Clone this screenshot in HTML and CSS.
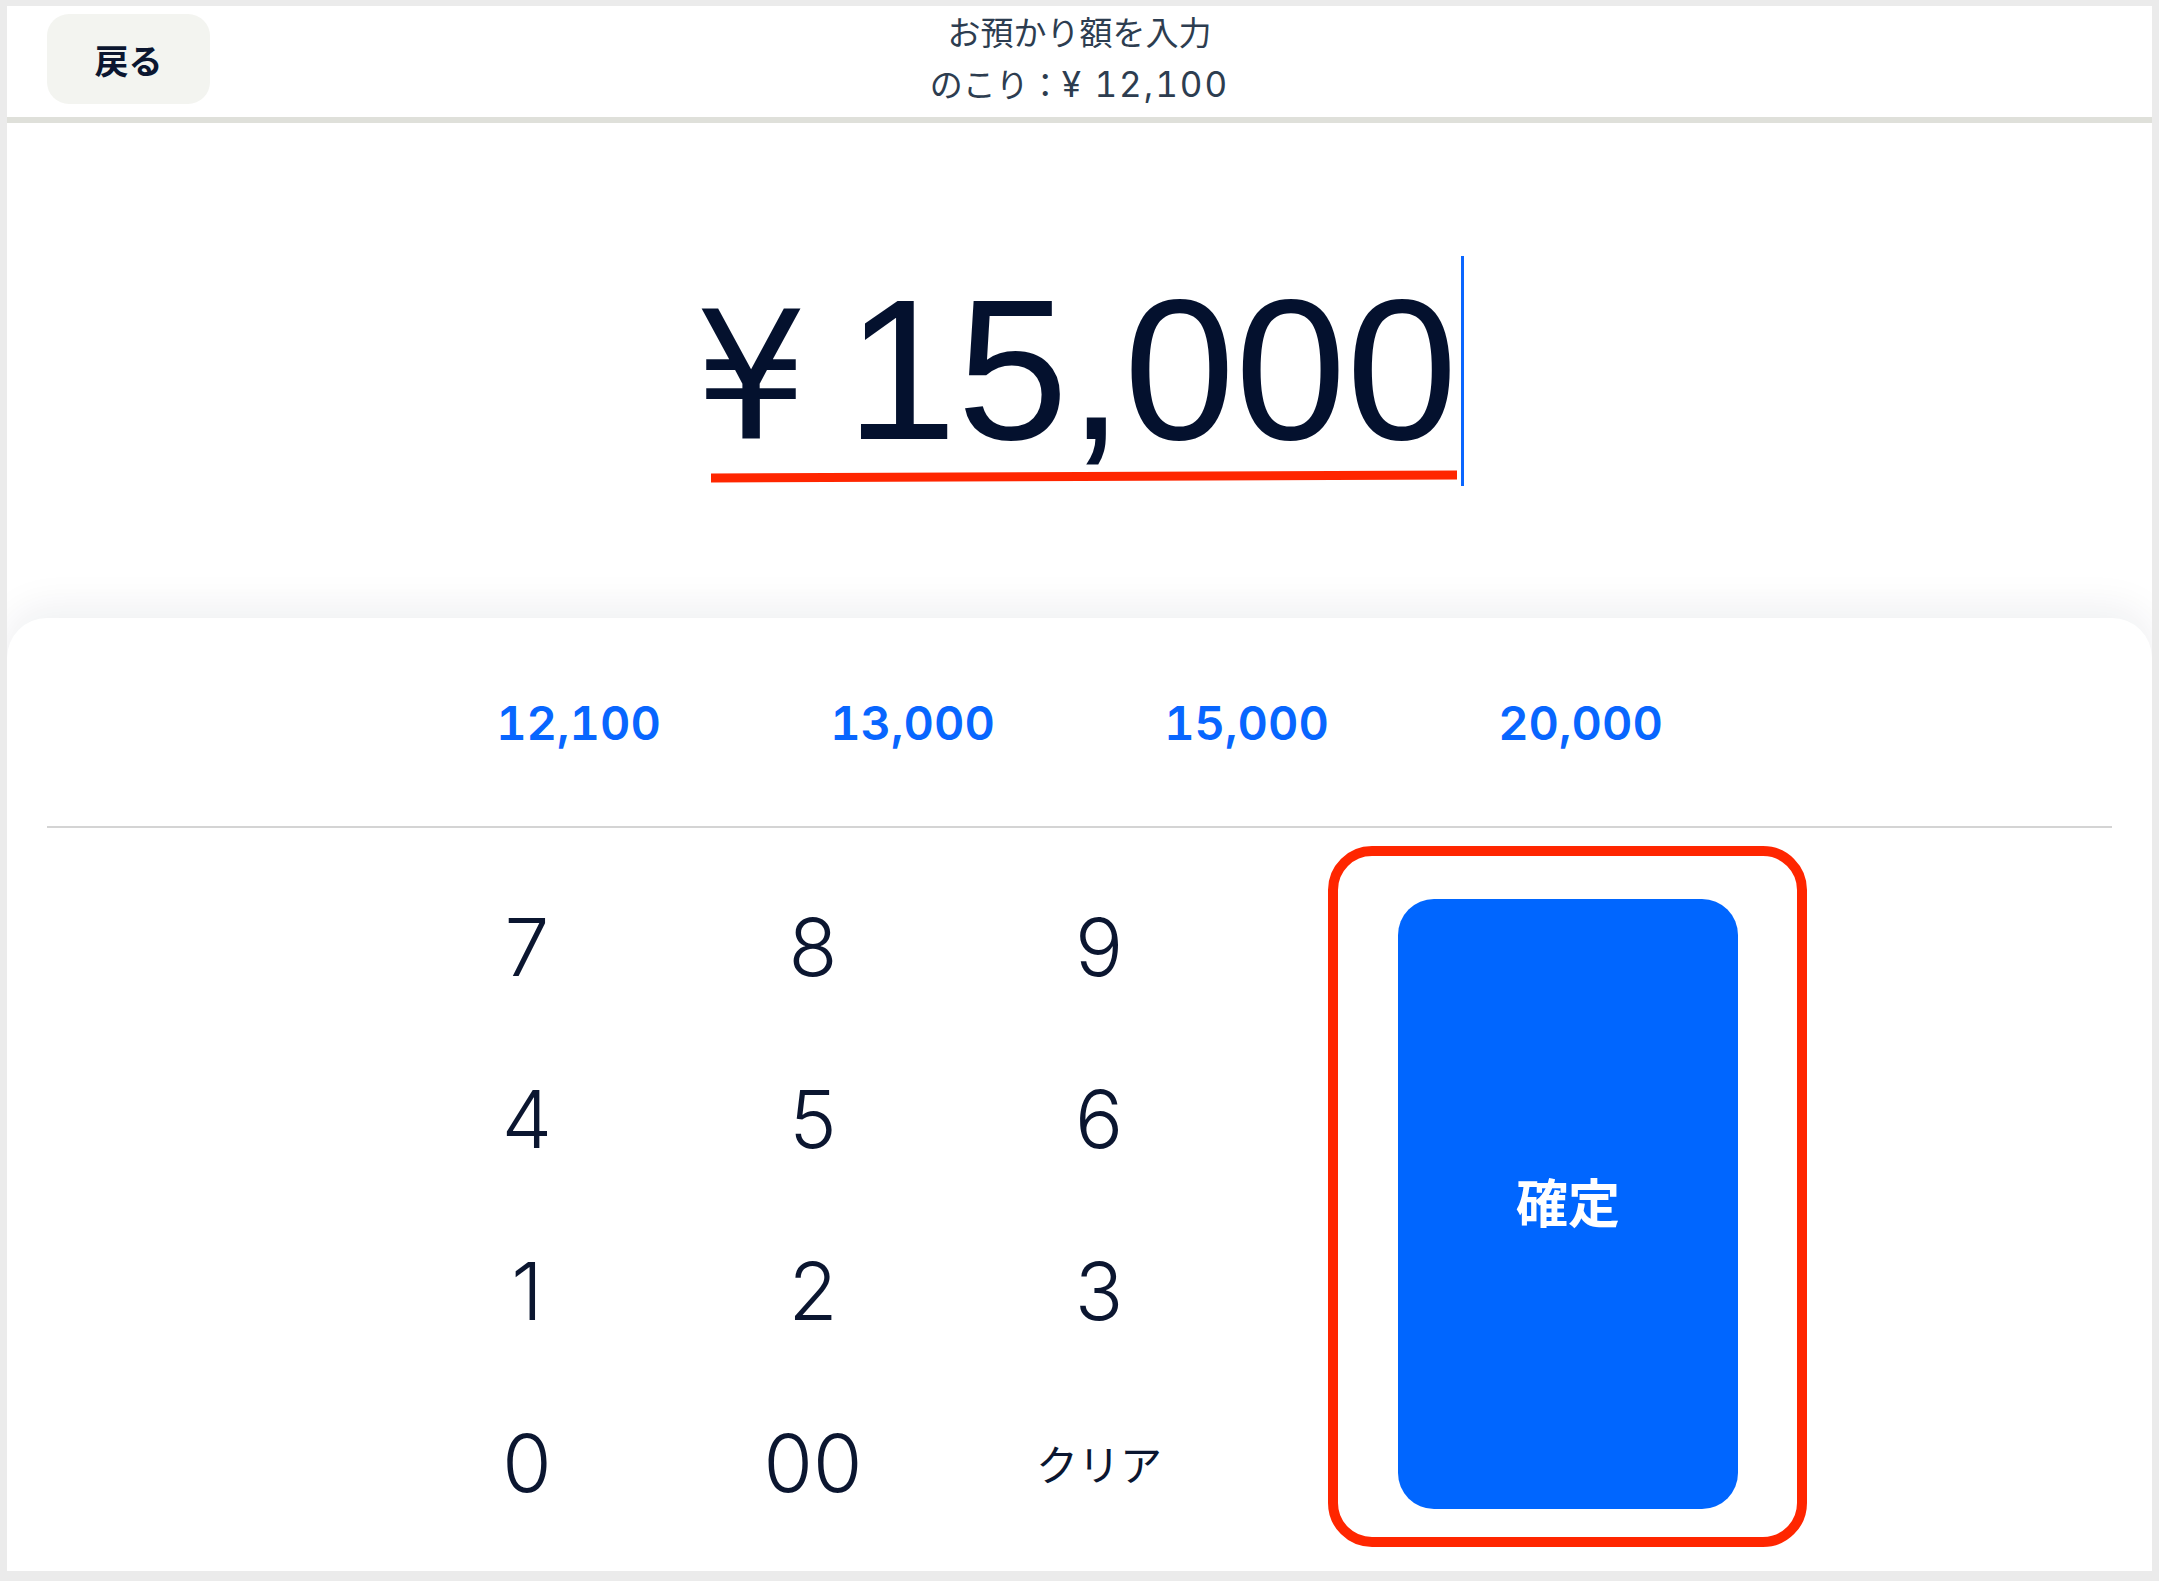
FILE: index.html
```html
<!DOCTYPE html>
<html lang="ja">
<head>
    <meta charset="UTF-8">
    <meta name="viewport" content="width=device-width, initial-scale=1.0">
    <title>お預かり額を入力</title>
    <link rel="stylesheet" href="styles.css">
</head>
<body>
    <div class="app">
        <header class="topbar">
            <button class="back-btn">戻る</button>
            <div class="title">
                <div>お預かり額を入力</div>
                <div>のこり：<span class="rest">¥ 12,100</span></div>
            </div>
            <div></div>
        </header>

        <section class="amount-area">
            <div class="amount">
                <span class="yen">¥</span><span class="digits">15,000</span>
                <span class="caret"></span>
                <span class="mark-line"></span>
            </div>
        </section>

        <section class="panel">
            <div class="quick">
                <button>12,100</button>
                <button>13,000</button>
                <button>15,000</button>
                <button>20,000</button>
            </div>

            <div class="keypad">
                <div class="keys">
                    <button>7</button>
                    <button>8</button>
                    <button>9</button>
                    <button>4</button>
                    <button>5</button>
                    <button>6</button>
                    <button>1</button>
                    <button>2</button>
                    <button>3</button>
                    <button>0</button>
                    <button>00</button>
                    <button class="clear">クリア</button>
                </div>
                <div class="confirm-mark">
                    <button class="confirm">確定</button>
                </div>
            </div>
        </section>
    </div>
</body>
</html>
```

FILE: styles.css
```css
body { margin: 0; background: #ebebeb; font-family: "Inter", "Noto Sans CJK JP", sans-serif; }
button { cursor: pointer; padding: 0; }

.app { margin: 6px 7px 10px; height: 1565px; background: #fff; display: flex; flex-direction: column; overflow: hidden; }

/* header */
.topbar { height: 111px; flex: none; border-bottom: 6px solid #dfe0da; display: grid; grid-template-columns: 1fr auto 1fr; align-items: start; padding: 0 40px; }
.back-btn { justify-self: start; margin-top: 8px; width: 163px; height: 90px; border: none; border-radius: 22px; background: #f3f4f0; color: #0b1630; font: 700 34px "Noto Sans CJK JP", sans-serif; }
.title { text-align: center; font-size: 33px; line-height: 51px; color: #2d3d50; padding-top: 2px; }
.rest { font-size: 35px; letter-spacing: 2px; font-variant-numeric: tabular-nums; }

/* amount */
.amount-area { height: 495px; flex: none; box-sizing: border-box; padding-top: 147px; display: flex; justify-content: center; }
.amount { position: relative; display: flex; align-items: baseline; height: 200px; font: 200px/1 "Liberation Sans", sans-serif; color: #04112e; }
.yen { font-family: "DejaVu Sans", sans-serif; font-size: 178px; margin-right: 38px; }
.caret { align-self: center; width: 3px; height: 230px; margin: 0 0 -2px 4px; background: #0a66ff; }
.mark-line { position: absolute; left: 16px; right: 8px; top: 202px; height: 9px; background: #ff2600; transform: rotate(-0.23deg); }

/* bottom panel */
.panel { flex: 1; background: #fff; border-radius: 40px 40px 0 0; box-shadow: 0 -10px 40px rgba(20, 30, 60, 0.07); padding: 0 40px; display: flex; flex-direction: column; }
.quick { height: 208px; flex: none; display: flex; justify-content: center; align-items: center; border-bottom: 2px solid #d4d4d4; }
.quick button { width: 334px; border: none; background: none; color: #0866ff; font: 600 47px "Inter", sans-serif; font-variant-numeric: tabular-nums; }

.keypad { flex: 1; display: flex; gap: 86px; padding: 32px 0 23px 337px; }
.keys { display: grid; grid-template-columns: repeat(3, 286px); grid-auto-rows: 172px; }
.keys button { border: none; background: none; color: #0b1630; font: 300 80px "Inter", sans-serif; }
.keys .clear { font: 400 42px "Noto Sans CJK JP", sans-serif; }

.confirm-mark { align-self: flex-start; margin-top: -14px; border: 10px solid #ff2600; border-radius: 44px; padding: 43px 59px 28px 60px; }
.confirm { display: block; width: 340px; height: 610px; padding-bottom: 8px; border: none; border-radius: 36px; background: #0066ff; color: #fff; font: 700 52px "Noto Sans CJK JP", sans-serif; }
```
